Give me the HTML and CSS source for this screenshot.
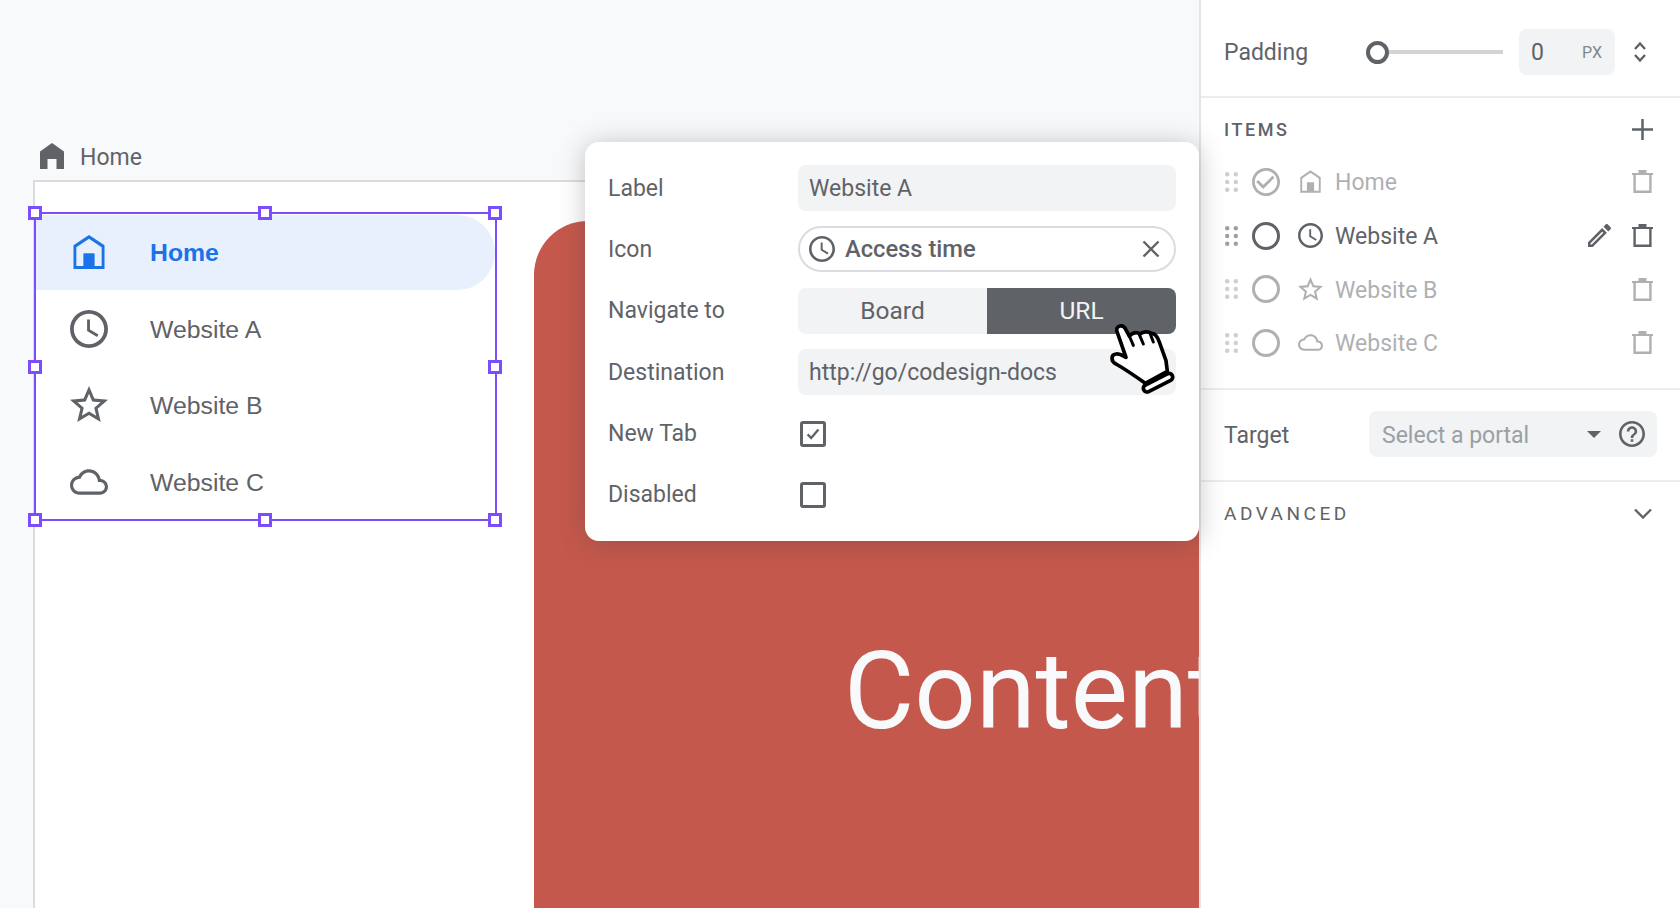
FILE: index.html
```html
<!DOCTYPE html>
<html lang="en">
<head>
  <meta charset="UTF-8">
  <meta name="viewport" content="width=device-width, initial-scale=1.0">
  <title>Navigation editor</title>
  <link rel="stylesheet" href="styles.css">
</head>
<body>
  <svg class="defs">
    <symbol id="i-house" viewBox="0 0 24 24"><path fill-rule="evenodd" d="M12 1.2l9.8 6.6v14.9H2.2V7.8zM12 3.7L4 9v11.9h4.6V13h6.8v7.9H20V9z"/><path d="M8.6 13h6.8v8H8.6z"/></symbol>
    <symbol id="i-clock" viewBox="2 2 20 20"><path d="M11.99 2C6.47 2 2 6.48 2 12s4.47 10 9.99 10C17.52 22 22 17.52 22 12S17.52 2 11.99 2zM12 20c-4.42 0-8-3.58-8-8s3.58-8 8-8 8 3.58 8 8-3.58 8-8 8zM12.5 7H11v6l5.25 3.15.75-1.23-4.5-2.67z"/></symbol>
    <symbol id="i-star" viewBox="2 2 20 20"><path d="M22 9.24l-7.19-.62L12 2 9.19 8.63 2 9.24l5.46 4.73L5.82 21 12 17.27 18.18 21l-1.63-7.03L22 9.24zM12 15.4l-3.76 2.27 1-4.28-3.32-2.88 4.38-.38L12 6.1l1.71 4.04 4.38.38-3.32 2.88 1 4.28L12 15.4z"/></symbol>
    <symbol id="i-cloud" viewBox="0 0 24 24"><path d="M19.35 10.04C18.67 6.59 15.64 4 12 4 9.11 4 6.6 5.64 5.35 8.04 2.34 8.36 0 10.91 0 14c0 3.31 2.69 6 6 6h13c2.76 0 5-2.24 5-5 0-2.64-2.05-4.78-4.65-4.96zM19 18H6c-2.21 0-4-1.79-4-4 0-2.05 1.53-3.76 3.56-3.97l1.07-.11.5-.95C8.08 7.14 9.94 6 12 6c2.62 0 4.88 1.86 5.39 4.43l.3 1.5 1.53.11c1.56.1 2.78 1.41 2.78 2.96 0 1.65-1.35 3-3 3z"/></symbol>
    <symbol id="i-trash" viewBox="0 0 21 23"><path d="M0 3h21v2H0zM6.5 0h8v3h-8z"/><path fill="none" stroke="currentColor" stroke-width="2.4" d="M2.6 4v17.8h15.8V4"/></symbol>
    <symbol id="i-grip" viewBox="0 0 13 20"><circle cx="2.2" cy="2.2" r="2.2"/><circle cx="10.8" cy="2.2" r="2.2"/><circle cx="2.2" cy="10" r="2.2"/><circle cx="10.8" cy="10" r="2.2"/><circle cx="2.2" cy="17.8" r="2.2"/><circle cx="10.8" cy="17.8" r="2.2"/></symbol>
  </svg>

  <main class="canvas">
    <div class="crumb">
      <svg class="crumb-icon" viewBox="0 0 24 26"><path d="M12 0l12 8.5V26h-7.5V16h-9v10H0V8.5z"/></svg>
      <span class="crumb-text">Home</span>
    </div>

    <div class="frame">
      <nav class="nav">
        <a class="nav-item active"><svg class="nav-icon"><use href="#i-house"/></svg><span class="nav-text">Home</span></a>
        <a class="nav-item"><svg class="nav-icon"><use href="#i-clock"/></svg><span class="nav-text">Website A</span></a>
        <a class="nav-item"><svg class="nav-icon"><use href="#i-star"/></svg><span class="nav-text">Website B</span></a>
        <a class="nav-item"><svg class="nav-icon"><use href="#i-cloud"/></svg><span class="nav-text">Website C</span></a>
        <span class="handle h-tl"></span><span class="handle h-tc"></span><span class="handle h-tr"></span>
        <span class="handle h-ml"></span><span class="handle h-mr"></span>
        <span class="handle h-bl"></span><span class="handle h-bc"></span><span class="handle h-br"></span>
      </nav>
      <div class="content">Content</div>
    </div>

    <form class="popup">
      <label>Label</label>
      <div class="field">Website A</div>

      <label>Icon</label>
      <div class="chip">
        <svg class="chip-icon"><use href="#i-clock"/></svg>
        <span class="chip-text">Access time</span>
        <svg class="chip-x" viewBox="0 0 18 18"><path d="M1.5 1.5l15 15M16.5 1.5l-15 15"/></svg>
      </div>

      <label>Navigate to</label>
      <div class="toggle">
        <span>Board</span>
        <span class="on">URL</span>
      </div>

      <label>Destination</label>
      <div class="field">http://go/codesign-docs</div>

      <label>New Tab</label>
      <div class="check-cell">
        <span class="checkbox">
          <svg viewBox="0 0 20 20"><path d="M4 10.5l4 4 8-9.5"/></svg>
        </span>
      </div>

      <label>Disabled</label>
      <div class="check-cell"><span class="checkbox"></span></div>
    </form>

    <svg class="hand" viewBox="0 0 360 300">
      <path class="hand-fill" d="M110 92C108 76 130 72 137 88L148 108C160 96 172 96 180 102C190 94 205 94 214 100C226 100 234 114 238 126L258 182L262 214L196 250C175 235 140 210 108 192C92 184 92 164 108 162C118 160 130 168 138 172Z"/>
      <path class="hand-line" d="M148 108L160 136M178 104L190 132M210 100L220 126"/>
      <rect class="hand-fill" x="186" y="237" width="96" height="22" rx="11" transform="rotate(-27 234 248)"/>
    </svg>
  </main>

  <aside class="panel">
    <section class="section padding-row">
      <span class="prop-label">Padding</span>
      <div class="slider"><span class="thumb"></span><span class="track"></span></div>
      <div class="num"><span>0</span><span class="unit">PX</span></div>
      <svg class="stepper" viewBox="0 0 14 22"><path d="M2 8l5-5.5L12 8M2 14l5 5.5 5-5.5"/></svg>
    </section>

    <section class="section items">
      <div class="items-head">
        <h2>ITEMS</h2>
        <svg class="plus" viewBox="0 0 20 20"><path d="M10 0v20M0 10h20"/></svg>
      </div>

      <div class="row faded">
        <svg class="grip"><use href="#i-grip"/></svg>
        <svg class="radio-check" viewBox="2 2 20 20"><path d="M16.59 7.58L10 14.17l-3.59-3.58L5 12l5 5 8-8zM12 2C6.48 2 2 6.48 2 12s4.48 10 10 10 10-4.48 10-10S17.52 2 12 2zm0 18c-4.42 0-8-3.58-8-8s3.58-8 8-8 8 3.58 8 8-3.58 8-8 8z"/></svg>
        <svg class="row-icon"><use href="#i-house"/></svg>
        <span class="row-text">Home</span>
        <svg class="trash"><use href="#i-trash"/></svg>
      </div>
      <div class="row">
        <svg class="grip"><use href="#i-grip"/></svg>
        <span class="radio"></span>
        <svg class="row-icon"><use href="#i-clock"/></svg>
        <span class="row-text">Website A</span>
        <svg class="pencil" viewBox="3 3 18 18"><path d="M14.06 9.02l.92.92L5.92 19H5v-.92l9.06-9.06M17.66 3c-.25 0-.51.1-.7.29l-1.83 1.83 3.75 3.75 1.83-1.83c.39-.39.39-1.02 0-1.41l-2.34-2.34c-.2-.2-.45-.29-.71-.29zm-3.6 3.19L3 17.25V21h3.75L17.81 9.94l-3.75-3.75z"/></svg>
        <svg class="trash"><use href="#i-trash"/></svg>
      </div>
      <div class="row faded">
        <svg class="grip"><use href="#i-grip"/></svg>
        <span class="radio"></span>
        <svg class="row-icon"><use href="#i-star"/></svg>
        <span class="row-text">Website B</span>
        <svg class="trash"><use href="#i-trash"/></svg>
      </div>
      <div class="row faded">
        <svg class="grip"><use href="#i-grip"/></svg>
        <span class="radio"></span>
        <svg class="row-icon"><use href="#i-cloud"/></svg>
        <span class="row-text">Website C</span>
        <svg class="trash"><use href="#i-trash"/></svg>
      </div>
    </section>

    <section class="section target-row">
      <span class="prop-label target-label">Target</span>
      <div class="select">
        <span class="select-text">Select a portal</span>
        <span class="caret"></span>
        <svg class="help" viewBox="2 2 20 20"><path d="M11 18h2v-2h-2v2zm1-16C6.48 2 2 6.48 2 12s4.48 10 10 10 10-4.48 10-10S17.52 2 12 2zm0 18c-4.41 0-8-3.59-8-8s3.59-8 8-8 8 3.59 8 8-3.59 8-8 8zm0-14c-2.21 0-4 1.79-4 4h2c0-1.1.9-2 2-2s2 .9 2 2c0 2-3 1.75-3 5h2c0-2.25 3-2.5 3-5 0-2.21-1.79-4-4-4z"/></svg>
      </div>
    </section>

    <section class="advanced">
      <h2 class="advanced-title">ADVANCED</h2>
      <svg class="chev" viewBox="0 0 18 11"><path d="M1 1.5l8 8 8-8"/></svg>
    </section>
  </aside>
</body>
</html>
```

FILE: styles.css
```css
* {
  box-sizing: border-box;
}

html, body {
  height: 100%;
}

body {
  margin: 0;
  display: flex;
  overflow: hidden;
  font-family: 'Roboto', sans-serif;
  font-size: 23px;
  color: #5f6368;
  background-color: #f8f9fa;
}

svg {
  fill: currentColor;
  display: block;
  flex: none;
}

.defs {
  display: none;
}

/* canvas */

.canvas {
  flex: 1;
  min-width: 0;
  display: flex;
  flex-direction: column;
  padding: 143px 0 0 33px;
}

.crumb {
  display: flex;
  align-items: center;
  height: 26px;
  margin-left: 7px;
  margin-bottom: 11px;
  line-height: 28px;
}

.crumb-icon {
  width: 24px;
  height: 26px;
  margin-right: 16px;
}

.crumb-text {
  padding-top: 4px;
}

.frame {
  flex: 1;
  min-height: 0;
  display: flex;
  align-items: flex-start;
  padding-top: 30px;
  background-color: white;
  border-top: 2px solid #dadce0;
  border-left: 2px solid #dadce0;
}

.nav {
  position: relative;
  flex: none;
  width: 463px;
  height: 309px;
  margin-left: -1px;
  padding-top: 1px;
  display: flex;
  flex-direction: column;
  gap: 1.7px;
  border: 2px solid #7c4dff;
  font-family: 'Liberation Sans', sans-serif;
  font-size: 24.8px;
}

.nav-item {
  display: flex;
  align-items: center;
  height: 75px;
  padding-left: 34px;
  gap: 42px;
}

.nav-text {
  padding-top: 2px;
}

.nav-item.active {
  color: #1a73e8;
  font-weight: bold;
  background-color: #e8f0fd;
  border-radius: 0 38px 38px 0;
}

.nav-icon {
  width: 38px;
  height: 38px;
}

.handle {
  position: absolute;
  width: 14px;
  height: 14px;
  background-color: white;
  border: 3px solid #7c4dff;
}

.h-tl { left: -8px; top: -8px; }
.h-tc { left: 222px; top: -8px; }
.h-tr { right: -7px; top: -8px; }
.h-ml { left: -8px; top: 146px; }
.h-mr { right: -7px; top: 146px; }
.h-bl { left: -8px; bottom: -8px; }
.h-bc { left: 222px; bottom: -8px; }
.h-br { right: -7px; bottom: -8px; }

.content {
  flex: 1;
  min-width: 0;
  align-self: stretch;
  margin: 9px 0 0 37px;
  padding: 416px 0 0 310px;
  overflow: hidden;
  white-space: nowrap;
  background-color: #c5584c;
  border-top-left-radius: 54px;
  color: #f8f9fa;
  font-size: 108px;
  line-height: 1;
}

/* popup */

.popup {
  position: absolute;
  z-index: 2;
  left: 585px;
  top: 142px;
  width: 614px;
  height: 399px;
  padding: 23px;
  display: grid;
  grid-template-columns: 190px 1fr;
  grid-auto-rows: 46px;
  row-gap: 15.4px;
  align-items: center;
  background-color: white;
  border-radius: 14px;
  box-shadow: 0 2px 26px rgba(60, 64, 67, 0.3);
}

.field {
  height: 46px;
  padding-left: 11px;
  line-height: 47px;
  background-color: #f1f3f4;
  border-radius: 8px;
}

.chip {
  display: flex;
  align-items: center;
  height: 46px;
  padding: 0 14px 0 9px;
  border: 2px solid #dadce0;
  border-radius: 23px;
}

.chip-icon {
  width: 26px;
  height: 26px;
  margin-right: 10px;
}

.chip-text {
  flex: 1;
  font-size: 23.7px;
  font-weight: 500;
}

.chip-x {
  width: 18px;
  height: 18px;
  fill: none;
  stroke: currentColor;
  stroke-width: 2.4;
}

.toggle {
  display: flex;
  height: 46px;
  line-height: 46px;
  font-size: 24.5px;
  text-align: center;
  background-color: #f1f3f4;
  border-radius: 8px;
  overflow: hidden;
}

.toggle span {
  flex: 1;
}

.toggle .on {
  background-color: #5f6368;
  color: #f1f3f4;
}

.check-cell {
  padding-left: 2px;
}

.checkbox {
  display: block;
  width: 26px;
  height: 26px;
  padding: 1px;
  border: 3px solid #5f6368;
  border-radius: 3px;
}

.checkbox svg {
  fill: none;
  stroke: #5f6368;
  stroke-width: 2.6;
}

.hand {
  position: absolute;
  z-index: 3;
  left: 1080px;
  top: 300px;
  width: 120px;
  height: 100px;
}

.hand-fill {
  fill: white;
  stroke: black;
  stroke-width: 11;
  stroke-linejoin: round;
}

.hand-line {
  fill: none;
  stroke: black;
  stroke-width: 9;
  stroke-linecap: round;
}

/* right panel */

.panel {
  position: relative;
  z-index: 1;
  flex: none;
  width: 481px;
  background-color: white;
  border-left: 2px solid #e3e5e8;
}

.section {
  border-bottom: 2px solid #ebedef;
}

.padding-row {
  display: flex;
  align-items: center;
  height: 98px;
  padding: 29px 0 21px 23px;
}

.prop-label {
  flex: none;
  width: 142px;
}

.slider {
  display: flex;
  align-items: center;
  width: 137px;
  margin-right: 16px;
}

.thumb {
  flex: none;
  width: 23px;
  height: 23px;
  background-color: white;
  border: 4px solid #5f6368;
  border-radius: 50%;
}

.track {
  flex: 1;
  height: 4px;
  background-color: #d2d3d4;
}

.num {
  display: flex;
  justify-content: space-between;
  align-items: center;
  width: 96px;
  height: 46px;
  padding: 0 13px 0 12px;
  background-color: #f1f3f4;
  border-radius: 8px;
}

.unit {
  font-size: 16px;
  color: #80868b;
}

.stepper {
  width: 14px;
  height: 22px;
  margin-left: 18px;
  fill: none;
  stroke: currentColor;
  stroke-width: 2.4;
}

.items {
  height: 292px;
  padding: 15px 27px 0 23px;
}

.items-head {
  display: flex;
  justify-content: space-between;
  align-items: center;
  height: 32px;
  margin-bottom: 10px;
}

h2 {
  margin: 0;
  font-size: 18px;
  font-weight: 500;
  letter-spacing: 2.6px;
}

.advanced-title {
  font-size: 19px;
  font-weight: 400;
  letter-spacing: 3.5px;
}

.plus {
  width: 21px;
  height: 21px;
  fill: none;
  stroke: currentColor;
  stroke-width: 2.4;
}

.row {
  display: flex;
  align-items: center;
  height: 53.7px;
  padding-left: 1px;
}

.faded {
  opacity: 0.5;
}

.grip {
  width: 13px;
  height: 20px;
  color: #9aa0a6;
  margin-right: 14px;
}

.radio, .radio-check {
  flex: none;
  width: 28px;
  height: 28px;
  margin-right: 18px;
}

.radio {
  border: 3px solid #5f6368;
  border-radius: 50%;
}

.row-icon {
  width: 25px;
  height: 25px;
  margin-right: 12px;
}

.row-text {
  flex: 1;
  padding-top: 2px;
}

.pencil {
  width: 23px;
  height: 23px;
  margin-right: 21px;
}

.trash {
  width: 21px;
  height: 23px;
}

.target-row {
  display: flex;
  align-items: center;
  height: 92px;
  padding: 0 23px 2px 23px;
}

.target-label {
  width: 145px;
  padding-top: 2px;
}

.select {
  flex: 1;
  display: flex;
  align-items: center;
  height: 46px;
  padding: 0 12px 0 13px;
  background-color: #f1f3f4;
  border-radius: 8px;
}

.select-text {
  flex: 1;
  padding-top: 2px;
  color: #9aa0a6;
}

.caret {
  width: 0;
  height: 0;
  margin-right: 18px;
  border-left: 7px solid transparent;
  border-right: 7px solid transparent;
  border-top: 7px solid #5f6368;
}

.help {
  width: 26px;
  height: 26px;
}

.advanced {
  display: flex;
  justify-content: space-between;
  align-items: center;
  height: 62px;
  padding: 0 27px 0 23px;
}

.chev {
  width: 18px;
  height: 11px;
  margin-right: 1px;
  fill: none;
  stroke: currentColor;
  stroke-width: 2.4;
}
```
